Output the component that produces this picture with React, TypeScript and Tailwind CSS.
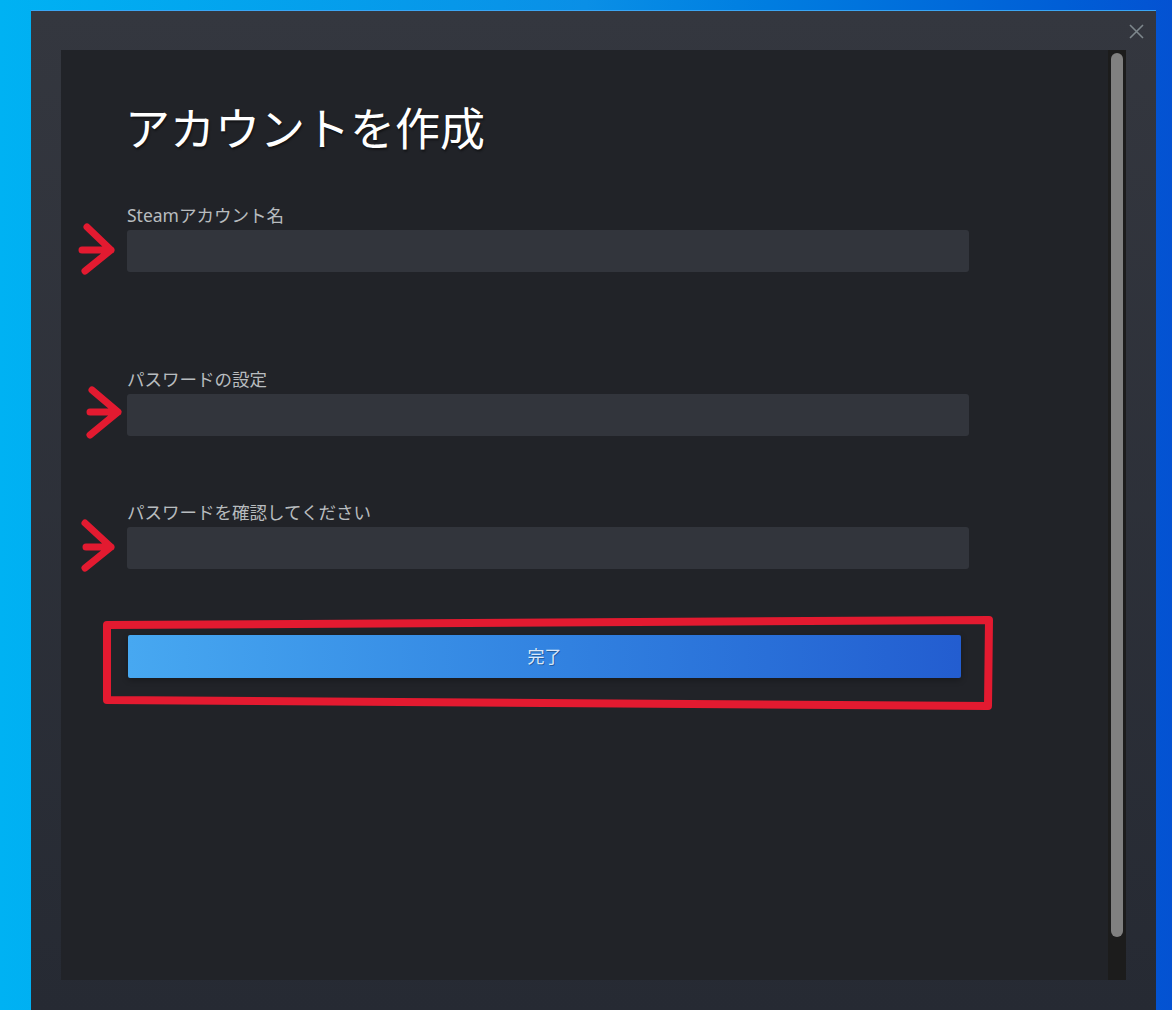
import React from "react"

const font = { fontFamily: '"Noto Sans", "Noto Sans CJK JP", sans-serif' }

function Field({ label, className }: { label: string; className?: string }) {
  return (
    <div className={className}>
      <div className="text-[17.5px] leading-[20px] text-[#b8bcbf]">{label}</div>
      <div className="mt-[5px] h-[42px] w-[842px] rounded-[3px] bg-[#32353c]" />
    </div>
  )
}

export default function App() {
  return (
    <div
      className="relative h-[1010px] w-[1172px] overflow-hidden bg-gradient-to-r from-[#00b2f3] via-[#0a8fe6] to-[#0452d2] pl-[31px] pt-[10px]"
      style={font}
    >
      {/* window */}
      <div className="relative h-[1000px] w-[1125px] border-t border-[#3aa6f5] bg-gradient-to-b from-[#34373f] to-[#262a33] pl-[30px] pt-[39px]">
        <button className="absolute right-[12px] top-[12px] flex h-[16px] w-[16px] items-center justify-center">
          <svg width="15" height="15" viewBox="0 0 15 15" fill="none" stroke="#7d878c" strokeWidth="1.6">
            <path d="M1 1L14 14M14 1L1 14" />
          </svg>
        </button>

        <div className="flex h-[930px] w-[1065px] bg-[#212328]">
          {/* content */}
          <div className="flex-1 pl-[66px] pt-[57px]">
            <h1 className="-ml-[2px] text-[45px] leading-[44px] font-normal text-white [text-shadow:1px_2px_2px_rgba(0,0,0,0.45)]">
              アカウントを作成
            </h1>

            <Field label="Steamアカウント名" className="mt-[54px]" />
            <Field label="パスワードの設定" className="mt-[97px]" />
            <Field label="パスワードを確認してください" className="mt-[66px]" />

            <button className="ml-[1px] mt-[66px] flex h-[43px] w-[833px] items-center justify-center rounded-[2px] bg-gradient-to-r from-[#47a8f1] to-[#235dd0] text-[17px] text-[#dce8f8] shadow-[0_2px_6px_rgba(0,0,0,0.3)] [text-shadow:1px_1px_0_rgba(0,0,0,0.3)]">
              完了
            </button>
          </div>

          {/* scrollbar */}
          <div className="w-[18px] bg-[#1c1c1c] px-[3px] pt-[3px]">
            <div className="h-[884px] w-[12px] rounded-full bg-[#808080]" />
          </div>
        </div>
      </div>

      {/* red annotations */}
      <svg
        className="pointer-events-none absolute left-0 top-0"
        width="1172"
        height="1010"
        viewBox="0 0 1172 1010"
        fill="none"
        stroke="#e31a30"
        strokeWidth="7"
        strokeLinecap="round"
        strokeLinejoin="round"
      >
        <path d="M82 250H111M87 227L111 250L85 271" />
        <path d="M90 412H118M92 390L118 412L90 435" />
        <path d="M86 547H111M85 523L111 547L85 568" />
        <path d="M107 625L989 620L988 706L107 700Z" strokeWidth="8" />
      </svg>
    </div>
  )
}
